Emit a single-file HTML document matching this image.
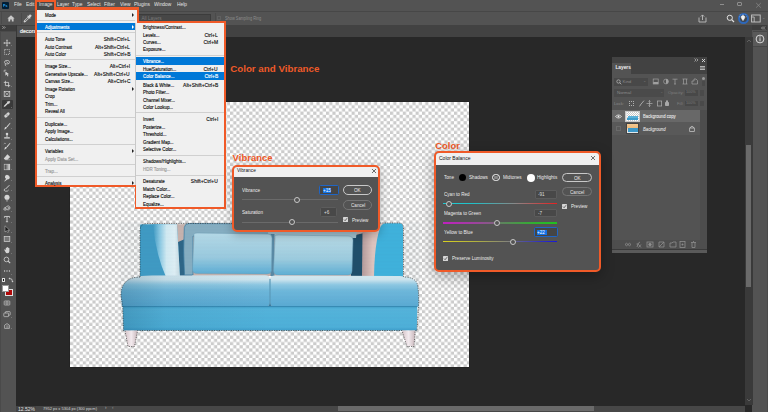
<!DOCTYPE html>
<html><head><meta charset="utf-8">
<style>
*{margin:0;padding:0;box-sizing:border-box}
html,body{width:768px;height:412px;overflow:hidden;background:#282828;font-family:"Liberation Sans",sans-serif;position:relative}
.a{position:absolute}
.t{position:absolute;white-space:nowrap;line-height:1}
#menubar{left:0;top:0;width:768px;height:11px;background:#535353}
#menubar .t{color:#e4e4e4;font-size:5.4px;top:2.4px;transform:scaleX(0.9);transform-origin:0 0}
#opts{left:0;top:11px;width:768px;height:14px;background:#535353;border-top:1px solid #474747}
#tabs{left:0;top:25px;width:768px;height:12px;background:#424242}
#tool{left:0;top:25px;width:16px;height:387px;background:#535353;border-left:1px solid #4a4a4a}
#doc{left:70px;top:102px;width:399px;height:265px;background:#fff;box-shadow:0 0 1px #111}
.menu{background:#f0f0f0;border:2px solid #f05a28}
.mi{-webkit-text-stroke:0.15px currentColor;position:absolute;left:0;font-size:5.1px;transform:scaleX(0.87);transform-origin:0 0;color:#222;white-space:nowrap;line-height:1}
.sc{-webkit-text-stroke:0.15px currentColor;position:absolute;font-size:5.1px;transform:scaleX(0.97);transform-origin:100% 0;color:#222;white-space:nowrap;line-height:1;text-align:right}
.sep{position:absolute;height:1px;background:#d0d0d0}
.hl{position:absolute;background:#0078d7}
.orange{color:#f05a28;font-weight:bold}
.dlgx{background:#535353;border:2px solid #f05a28;border-radius:6px;overflow:hidden}
.dlg .title{position:absolute;left:0;top:0;right:0;background:#f0f0f0}
.dt{position:absolute;font-size:5px;color:#ececec;white-space:nowrap;line-height:1;transform:scaleX(0.92);transform-origin:0 0}
.btn{position:absolute;border:1px solid #bdbdbd;border-radius:5px;color:#eee;font-size:5px;text-align:center}
.inp{position:absolute;background:#454545;border:1px solid #3e3e3e;border-radius:1px;font-size:5px;color:#ddd}
.track{position:absolute;height:1px;background:#6a6a6a}
.knob{position:absolute;width:6px;height:6px;border-radius:50%;border:0.8px solid #c8c8c8;background:#535353}
</style></head><body>

<!-- menubar -->
<div id="menubar" class="a">
  <div class="a" style="left:2px;top:2px;width:7px;height:7px;background:#001e36;border-radius:1px"></div>
  <div class="t" style="left:3px;top:3.5px;font-size:4px;color:#31a8ff;font-weight:bold">Ps</div>
  <div class="t" style="left:14px">File</div>
  <div class="t" style="left:26px">Edit</div>
  <div class="t" style="left:39px">Image</div>
  <div class="t" style="left:57px">Layer</div>
  <div class="t" style="left:72px">Type</div>
  <div class="t" style="left:87px">Select</div>
  <div class="t" style="left:104px">Filter</div>
  <div class="t" style="left:120px">View</div>
  <div class="t" style="left:134px">Plugins</div>
  <div class="t" style="left:154px">Window</div>
  <div class="t" style="left:177px">Help</div>
</div>
<div id="opts" class="a"></div>
<div id="tabs" class="a"></div>
<div id="tool" class="a"></div>

<div id="doc" class="a"><svg width="399" height="265" style="position:absolute;left:0;top:0"><defs><pattern id="chk" width="6.4" height="6.4" patternUnits="userSpaceOnUse"><rect width="6.4" height="6.4" fill="#fff"/><rect x="3.2" y="0" width="3.2" height="3.2" fill="#cccccc"/><rect x="0" y="3.2" width="3.2" height="3.2" fill="#cccccc"/></pattern></defs><rect width="399" height="265" fill="url(#chk)"/></svg></div>


<!-- toolbar icons -->
<div class="a" style="left:0;top:31px;width:16px;height:1px;background:#4a4a4a"></div>
<div class="a" style="left:2.2px;top:100px;width:11px;height:8.8px;background:#3a3a3a;border-radius:1px"></div>
<svg class="a" style="left:3px;top:38.6px" width="8" height="8" viewBox="0 0 10 10"><path d="M5 1 V9 M1 5 H9" stroke="#d4d4d4" stroke-width="1"/><path d="M5 0.5 L3.8 2 H6.2 Z M5 9.5 L3.8 8 H6.2 Z M0.5 5 L2 3.8 V6.2 Z M9.5 5 L8 3.8 V6.2 Z" fill="#d4d4d4"/></svg>
<svg class="a" style="left:3px;top:48.0px" width="8" height="8" viewBox="0 0 10 10"><rect x="2" y="2" width="6" height="6" fill="none" stroke="#d4d4d4" stroke-width="0.9" stroke-dasharray="1.5 1"/></svg>
<svg class="a" style="left:3px;top:58.5px" width="8" height="8" viewBox="0 0 10 10"><ellipse cx="5" cy="4" rx="3.2" ry="2.3" fill="none" stroke="#d4d4d4" stroke-width="0.9"/><path d="M3 6 Q2 8 4 9" fill="none" stroke="#d4d4d4" stroke-width="0.9"/><path d="M4 3 L7 6" stroke="#d4d4d4" stroke-width="0.9"/></svg>
<svg class="a" style="left:3px;top:69.2px" width="8" height="8" viewBox="0 0 10 10"><path d="M1.5 1.5 H4 M1.5 1.5 V4" stroke="#d4d4d4" stroke-width="0.8"/><path d="M3 3 L3 8.5 L4.6 7 L5.8 9.3 L6.8 8.8 L5.7 6.6 L7.8 6.5 Z" fill="#d4d4d4"/></svg>
<svg class="a" style="left:3px;top:79.6px" width="8" height="8" viewBox="0 0 10 10"><path d="M3 1 V7 H9 M1 3 H7 V9" fill="none" stroke="#d4d4d4" stroke-width="1"/></svg>
<svg class="a" style="left:3px;top:89.8px" width="8" height="8" viewBox="0 0 10 10"><rect x="1.5" y="2" width="7" height="6" fill="none" stroke="#d4d4d4" stroke-width="0.9"/><path d="M1.5 2 L8.5 8 M8.5 2 L1.5 8" stroke="#d4d4d4" stroke-width="0.7"/></svg>
<svg class="a" style="left:3px;top:100.4px" width="8" height="8" viewBox="0 0 10 10"><path d="M7.6 0.8 L9.2 2.4 L7.6 4 L8.1 4.5 L7.4 5.2 L6.6 4.4 L2.8 8.2 L1.6 8.4 L1.2 9 L0.8 8.6 L1.3 7.9 L1.5 6.9 L5.3 3.1 L4.6 2.3 L5.3 1.6 L5.9 2.3 Z" fill="#d4d4d4"/></svg>
<svg class="a" style="left:3px;top:110.9px" width="8" height="8" viewBox="0 0 10 10"><g transform="rotate(-45 5 5)"><rect x="1" y="3.3" width="8" height="3.4" rx="1.7" fill="#d4d4d4"/></g><circle cx="5" cy="5" r="0.7" fill="#535353"/></svg>
<svg class="a" style="left:3px;top:121.7px" width="8" height="8" viewBox="0 0 10 10"><path d="M8.8 1 L4.5 5.6 L5.5 6.5 L9.3 1.6 Z" fill="#d4d4d4"/><path d="M4 6 Q2 6.3 2 8 Q1.8 9 1 9.3 Q3.8 9.6 5 7 Z" fill="#d4d4d4"/></svg>
<svg class="a" style="left:3px;top:131.9px" width="8" height="8" viewBox="0 0 10 10"><circle cx="5" cy="2.6" r="1.6" fill="#d4d4d4"/><rect x="4.4" y="3.8" width="1.2" height="2.5" fill="#d4d4d4"/><path d="M1.5 6.5 H8.5 V8.2 H1.5 Z" fill="#d4d4d4"/></svg>
<svg class="a" style="left:3px;top:142.0px" width="8" height="8" viewBox="0 0 10 10"><path d="M8.8 1 L4.5 5.6 L5.5 6.5 L9.3 1.6 Z" fill="#d4d4d4"/><path d="M4 6 Q2 6.3 2 8 Q1.8 9 1 9.3 Q3.8 9.6 5 7 Z" fill="#d4d4d4"/><path d="M1 2.5 Q2 1 3.5 2" fill="none" stroke="#d4d4d4" stroke-width="0.7"/></svg>
<svg class="a" style="left:3px;top:152.6px" width="8" height="8" viewBox="0 0 10 10"><path d="M5.5 1.5 L9 5 L5.5 8.5 H2.5 L1 7 Z" fill="#d4d4d4"/><path d="M3 8.5 H9" stroke="#d4d4d4" stroke-width="0.6"/></svg>
<svg class="a" style="left:3px;top:162.8px" width="8" height="8" viewBox="0 0 10 10"><defs><linearGradient id="tg"><stop offset="0" stop-color="#333"/><stop offset="1" stop-color="#e0e0e0"/></linearGradient></defs><rect x="1.5" y="1.5" width="7" height="7" fill="url(#tg)" stroke="#d4d4d4" stroke-width="0.7"/></svg>
<svg class="a" style="left:3px;top:173.6px" width="8" height="8" viewBox="0 0 10 10"><path d="M5 1 Q8.5 2 8.5 4.5 Q8.5 7 5.5 7 L2 9.5 L1.5 9 L4 6 Q2 5 2.5 3 Q3 1 5 1 Z" fill="#d4d4d4"/></svg>
<svg class="a" style="left:3px;top:183.6px" width="8" height="8" viewBox="0 0 10 10"><path d="M8 1.5 L3 6.5" stroke="#d4d4d4" stroke-width="1.2"/><path d="M2 6 Q0.5 8.5 3 9 Q6 9.5 7 7.5" fill="none" stroke="#d4d4d4" stroke-width="1"/></svg>
<svg class="a" style="left:3px;top:193.5px" width="8" height="8" viewBox="0 0 10 10"><circle cx="5" cy="4" r="3.2" fill="#d4d4d4"/><path d="M5 7 V9.5" stroke="#d4d4d4" stroke-width="1"/></svg>
<svg class="a" style="left:3px;top:204.2px" width="8" height="8" viewBox="0 0 10 10"><path d="M1 7 Q1 4 4 4 Q5 2 7 2.5 Q9.5 3.5 8.5 6 Q7 8 4.5 7 Q2.5 8.5 1 7 Z" fill="none" stroke="#d4d4d4" stroke-width="1"/><circle cx="3.6" cy="6" r="0.9" fill="#d4d4d4"/><circle cx="6.6" cy="5" r="0.9" fill="#d4d4d4"/></svg>
<svg class="a" style="left:3px;top:215.0px" width="8" height="8" viewBox="0 0 10 10"><path d="M1.8 1.8 H8.2 V3.4 M1.8 1.8 V3.4 M5 1.8 V8.4 M3.6 8.4 H6.4" fill="none" stroke="#d4d4d4" stroke-width="1.1"/></svg>
<svg class="a" style="left:3px;top:225.2px" width="8" height="8" viewBox="0 0 10 10"><path d="M2.5 1 L2.5 8.8 L4.4 7.2 L5.8 9.6 L7 9 L5.8 6.6 L8.2 6.4 Z" fill="#1a1a1a" stroke="#d4d4d4" stroke-width="0.6"/></svg>
<svg class="a" style="left:3px;top:235.4px" width="8" height="8" viewBox="0 0 10 10"><rect x="1.5" y="2" width="7" height="6" fill="#777" stroke="#d4d4d4" stroke-width="0.9"/></svg>
<svg class="a" style="left:3px;top:246.3px" width="8" height="8" viewBox="0 0 10 10"><path d="M2 5.5 Q1 4.5 2.2 4 L3.5 5 V2.5 Q4.2 1.5 5 2.5 V1.8 Q5.8 0.8 6.5 1.8 V2.6 Q7.3 1.8 8 2.8 V6.5 Q8 9 5.5 9.2 Q3.5 9.2 2 5.5 Z" fill="#d4d4d4"/></svg>
<svg class="a" style="left:3px;top:256.2px" width="8" height="8" viewBox="0 0 10 10"><circle cx="4.3" cy="4.3" r="2.9" fill="none" stroke="#d4d4d4" stroke-width="1"/><path d="M6.4 6.4 L9 9" stroke="#d4d4d4" stroke-width="1.3"/></svg>
<svg class="a" style="left:3px;top:267.2px" width="8" height="8" viewBox="0 0 10 10"><circle cx="2" cy="5" r="0.8" fill="#d4d4d4"/><circle cx="5" cy="5" r="0.8" fill="#d4d4d4"/><circle cx="8" cy="5" r="0.8" fill="#d4d4d4"/></svg>
<svg class="a" style="left:3px;top:298.9px" width="8" height="8" viewBox="0 0 10 10"><rect x="1.5" y="2.5" width="7" height="5" rx="0.8" fill="none" stroke="#d4d4d4" stroke-width="0.8"/><circle cx="5" cy="5" r="1.5" fill="none" stroke="#d4d4d4" stroke-width="0.8"/></svg>
<svg class="a" style="left:3px;top:310.0px" width="8" height="8" viewBox="0 0 10 10"><rect x="3" y="2" width="6" height="4.5" rx="0.8" fill="none" stroke="#d4d4d4" stroke-width="0.8"/><rect x="1" y="3.8" width="6" height="4.5" rx="0.8" fill="#535353" stroke="#d4d4d4" stroke-width="0.8"/></svg>
<svg class="a" style="left:3px;top:321.8px" width="8" height="8" viewBox="0 0 10 10"><path d="M2 4 L5 2 L8 4 V8 H2 Z" fill="none" stroke="#d4d4d4" stroke-width="0.8"/><path d="M4 5 H7 M4 6.5 H7" stroke="#d4d4d4" stroke-width="0.6"/></svg>
<div class="a" style="left:11.3px;top:45.2px;width:0;height:0;border-left:1.3px solid transparent;border-bottom:1.3px solid #9a9a9a"></div>
<div class="a" style="left:11.3px;top:54.6px;width:0;height:0;border-left:1.3px solid transparent;border-bottom:1.3px solid #9a9a9a"></div>
<div class="a" style="left:11.3px;top:65.1px;width:0;height:0;border-left:1.3px solid transparent;border-bottom:1.3px solid #9a9a9a"></div>
<div class="a" style="left:11.3px;top:75.8px;width:0;height:0;border-left:1.3px solid transparent;border-bottom:1.3px solid #9a9a9a"></div>
<div class="a" style="left:11.3px;top:86.2px;width:0;height:0;border-left:1.3px solid transparent;border-bottom:1.3px solid #9a9a9a"></div>
<div class="a" style="left:11.3px;top:107.0px;width:0;height:0;border-left:1.3px solid transparent;border-bottom:1.3px solid #9a9a9a"></div>
<div class="a" style="left:11.3px;top:117.5px;width:0;height:0;border-left:1.3px solid transparent;border-bottom:1.3px solid #9a9a9a"></div>
<div class="a" style="left:11.3px;top:128.3px;width:0;height:0;border-left:1.3px solid transparent;border-bottom:1.3px solid #9a9a9a"></div>
<div class="a" style="left:11.3px;top:138.5px;width:0;height:0;border-left:1.3px solid transparent;border-bottom:1.3px solid #9a9a9a"></div>
<div class="a" style="left:11.3px;top:148.6px;width:0;height:0;border-left:1.3px solid transparent;border-bottom:1.3px solid #9a9a9a"></div>
<div class="a" style="left:11.3px;top:159.2px;width:0;height:0;border-left:1.3px solid transparent;border-bottom:1.3px solid #9a9a9a"></div>
<div class="a" style="left:11.3px;top:169.4px;width:0;height:0;border-left:1.3px solid transparent;border-bottom:1.3px solid #9a9a9a"></div>
<div class="a" style="left:11.3px;top:180.2px;width:0;height:0;border-left:1.3px solid transparent;border-bottom:1.3px solid #9a9a9a"></div>
<div class="a" style="left:11.3px;top:190.2px;width:0;height:0;border-left:1.3px solid transparent;border-bottom:1.3px solid #9a9a9a"></div>
<div class="a" style="left:11.3px;top:200.1px;width:0;height:0;border-left:1.3px solid transparent;border-bottom:1.3px solid #9a9a9a"></div>
<div class="a" style="left:11.3px;top:210.8px;width:0;height:0;border-left:1.3px solid transparent;border-bottom:1.3px solid #9a9a9a"></div>
<div class="a" style="left:11.3px;top:221.6px;width:0;height:0;border-left:1.3px solid transparent;border-bottom:1.3px solid #9a9a9a"></div>
<div class="a" style="left:11.3px;top:231.8px;width:0;height:0;border-left:1.3px solid transparent;border-bottom:1.3px solid #9a9a9a"></div>
<div class="a" style="left:11.3px;top:242.0px;width:0;height:0;border-left:1.3px solid transparent;border-bottom:1.3px solid #9a9a9a"></div>
<div class="a" style="left:11.3px;top:252.9px;width:0;height:0;border-left:1.3px solid transparent;border-bottom:1.3px solid #9a9a9a"></div>
<div class="a" style="left:11.3px;top:273.8px;width:0;height:0;border-left:1.3px solid transparent;border-bottom:1.3px solid #9a9a9a"></div>
<div class="a" style="left:11.3px;top:316.6px;width:0;height:0;border-left:1.3px solid transparent;border-bottom:1.3px solid #9a9a9a"></div>
<div class="a" style="left:11.3px;top:328.4px;width:0;height:0;border-left:1.3px solid transparent;border-bottom:1.3px solid #9a9a9a"></div>
<div class="a" style="left:2px;top:278px;width:3px;height:3.5px;background:#111;border:0.5px solid #ddd"></div>
<svg class="a" style="left:8px;top:277px" width="6" height="6" viewBox="0 0 6 6"><path d="M1 1.5 Q4.5 1 4.5 4.5" fill="none" stroke="#d0d0d0" stroke-width="0.8"/><path d="M0.5 1.5 L2 0.5 V2.5 Z M4.5 5.5 L3.5 4 H5.5 Z" fill="#d0d0d0"/></svg>
<div class="a" style="left:5.2px;top:288.5px;width:7.9px;height:7.8px;background:#b00808;border:0.6px solid #e0e0e0"></div>
<div class="a" style="left:2px;top:284.5px;width:6.9px;height:7.2px;background:#fff;border:0.5px solid #999"></div>
<!-- sofa -->
<svg class="a" style="left:70px;top:102px" width="399" height="265" viewBox="70 102 399 265">
 <defs>
  <linearGradient id="armL" x1="140" x2="179" y1="0" y2="0" gradientUnits="userSpaceOnUse">
   <stop offset="0" stop-color="#44a6d0"/><stop offset="0.42" stop-color="#4eaed6"/><stop offset="0.62" stop-color="#86cbe6"/><stop offset="0.85" stop-color="#b8e2f0"/><stop offset="1" stop-color="#98d2e8"/>
  </linearGradient>
  <linearGradient id="armH" x1="153" x2="180" y1="0" y2="0" gradientUnits="userSpaceOnUse">
   <stop offset="0" stop-color="#409cc6"/><stop offset="0.25" stop-color="#8ccbe6"/><stop offset="0.5" stop-color="#d6eef6"/><stop offset="0.8" stop-color="#e2f2f8"/><stop offset="1" stop-color="#c8dce4"/>
  </linearGradient>
  <linearGradient id="armRin" x1="362" x2="383" y1="0" y2="0" gradientUnits="userSpaceOnUse">
   <stop offset="0" stop-color="#b89c9c"/><stop offset="0.5" stop-color="#e2c6c0"/><stop offset="1" stop-color="#e8d0ca"/>
  </linearGradient>
  <linearGradient id="pil" x1="0" x2="0" y1="0" y2="1">
   <stop offset="0" stop-color="#b8dcea"/><stop offset="0.6" stop-color="#9ccde2"/><stop offset="1" stop-color="#5eb0d8"/>
  </linearGradient>
  <linearGradient id="pilR" x1="0" x2="0" y1="0" y2="1">
   <stop offset="0" stop-color="#bcdeea"/><stop offset="0.6" stop-color="#a0cfe2"/><stop offset="1" stop-color="#60b2d8"/>
  </linearGradient>
  <linearGradient id="seat" x1="0" x2="0" y1="275" y2="307" gradientUnits="userSpaceOnUse">
   <stop offset="0" stop-color="#d8ecf4"/><stop offset="0.14" stop-color="#d4eaf3"/><stop offset="0.3" stop-color="#92cce6"/><stop offset="0.5" stop-color="#70bade"/><stop offset="1" stop-color="#5aacd6"/>
  </linearGradient>
  <linearGradient id="base" x1="0" x2="0" y1="306" y2="331" gradientUnits="userSpaceOnUse">
   <stop offset="0" stop-color="#3e9ec8"/><stop offset="0.12" stop-color="#56b6de"/><stop offset="0.85" stop-color="#4eb2dc"/><stop offset="1" stop-color="#3c9ccb"/>
  </linearGradient>
  <linearGradient id="leg" x1="0" x2="1" y1="0" y2="0">
   <stop offset="0" stop-color="#d6c4c8"/><stop offset="0.5" stop-color="#f2eaee"/><stop offset="1" stop-color="#c8b6ba"/>
  </linearGradient>
  <linearGradient id="shadeL" x1="121" x2="419" y1="0" y2="0" gradientUnits="userSpaceOnUse">
   <stop offset="0" stop-color="#0a3a5a" stop-opacity="0.22"/><stop offset="0.15" stop-color="#0a3a5a" stop-opacity="0.06"/><stop offset="0.5" stop-color="#0a3a5a" stop-opacity="0"/><stop offset="1" stop-color="#0a3a5a" stop-opacity="0"/>
  </linearGradient>
  <pattern id="knit" width="1.4" height="1.4" patternUnits="userSpaceOnUse"><circle cx="0.7" cy="0.7" r="0.35" fill="#1a4a66" opacity="0.18"/></pattern>
 </defs>
 <!-- back visible strip -->
 <path d="M174 224.2 L364 223.5 L364 276 L174 276 Z" fill="#cbb5b0"/>
 <path d="M178 242 L192 236 L192 276 L178 276 Z" fill="#2e6688"/>
 <path d="M351 236 L364 233 L364 276 L351 276 Z" fill="#1f4e6a"/>
 <!-- back pillows -->
 <path d="M184.5 275 Q183 250 184.3 227.5 Q184.8 223.5 189 223.5 L270 224 L270 236 L193 236 L193 275 Z" fill="#88b0c4" stroke="#3a7aa0" stroke-width="0.7"/>
 <path d="M268 224 L350 224 Q356 224.5 357 230 L356 238 L268 238 Z" fill="#a8c8d6"/>
 <path d="M270.5 234 L274.5 234 L274.5 276 L270.5 276 Z" fill="#5a8aa6"/>
 <!-- left arm -->
 <path d="M140 277 L140 225.6 Q140 224.2 141.6 224.2 L177 224.2 L180 277 Z" fill="#409cc6"/>
 <path d="M153 224.2 L177 224.2 L180 277 L166 277 Q155 252 153 224.2 Z" fill="url(#armH)"/>
<!-- right arm inner -->
 <path d="M362 276 L362.5 231 Q363.5 223.5 371 223.5 L386 223.5 L383 276 Z" fill="url(#armRin)"/>
 <!-- right arm outer -->
 <path d="M374 277 Q374.5 244 380 228 Q381.5 223.2 386 223.2 L399.5 223.2 Q403 223.2 403 227 L403 277 Z" fill="#40b4df"/>
 <!-- pillows -->
 <path d="M194 236 Q193 233 197 233 L268 234 Q272 234 272 238 L271.5 270.5 Q271 274 267 274 L197 273.5 Q192 273.5 192.5 268 Z" fill="url(#pil)" stroke="#6f9fb6" stroke-width="0.5"/>
 <path d="M275 238 Q274 235 278 235 L348 236 Q353 236 353 240 L352 271 Q352 275 348 275 L278 275 Q273.5 275 273.5 270 Z" fill="url(#pilR)" stroke="#6f9fb6" stroke-width="0.5"/>
 <!-- seats -->
 <path d="M121 296 Q120.5 281 134 277.5 Q140 275.5 152 275.5 L265 275.2 Q270 275.2 270 280 L270 302 Q270 306.6 265 306.6 L122 306.6 Z" fill="url(#seat)"/>
 <path d="M270 280 Q270 275.5 275 275.5 L400 276 Q414 276.5 417 283 Q419 288 418.6 306.6 L275 306.6 Q270 306.6 270 302 Z" fill="url(#seat)"/>
 <path d="M269.4 279 L270.6 279 L270.6 306.6 L269.4 306.6 Z" fill="#5c9cbc"/>
 <path d="M265 306.6 Q270 306.6 270 302 Q270 306.6 275 306.6 Z" fill="#3a7ea4"/>
 <!-- base -->
 <path d="M122.7 306.2 L417.3 306.2 L416.8 330.5 L123.5 330.5 Z" fill="url(#base)"/>
 <path d="M122.7 306 L417.3 306 L417.3 307 L122.7 307 Z" fill="#2f86b2" opacity="0.8"/>
 <!-- legs -->
 <path d="M125 330.5 L137.6 330.5 L134.5 346.5 L128 346.5 Z" fill="url(#leg)"/>
 <path d="M402 330.5 L415.2 330.5 L414 346 L407 346 Z" fill="url(#leg)"/>
 <path d="M121 296 Q120.5 281 134 277.5 Q140 275.5 152 275.5 L400 276 Q414 276.5 417 283 Q419 288 418.6 306.6 L417 330.5 L123.5 330.5 L122.7 306.6 Z" fill="url(#shadeL)"/>
 <rect x="120" y="222" width="300" height="109" fill="url(#knit)"/>
 <!-- marching ants -->
 <path d="M140 277 L140 231 Q140 223.5 147 223.5 L399 223 Q403 223 403.5 227 L403.5 277 Q414 277 417 283 Q419 288 418.6 306.5 L417 330.5 L415.2 330.5 L414 346.5 L407 346.5 L402 330.5 L137.6 330.5 L134.5 346.5 L128 346.5 L125 330.5 L123.5 330.5 L122.7 306.5 L121 296 Q120.5 281 134 277.5 Z" fill="none" stroke="#222" stroke-width="0.6" stroke-dasharray="1.2 1.2"/>
</svg>

<!-- options bar content -->
<div class="a" style="left:1px;top:12px;width:1px;height:12px;background:#4a4a4a"></div>
<div class="a" style="left:21px;top:13px;width:1px;height:11px;background:#4a4a4a"></div>
<svg class="a" style="left:7px;top:15px" width="8" height="7" viewBox="0 0 8 7"><path d="M4 0.3 L7.6 3.5 L6.6 3.5 L6.6 6.6 L4.8 6.6 L4.8 4.6 L3.2 4.6 L3.2 6.6 L1.4 6.6 L1.4 3.5 L0.4 3.5 Z" fill="#c8c8c8"/></svg>
<svg class="a" style="left:23px;top:14px" width="9" height="9" viewBox="0 0 9 9"><path d="M6.4 0.8 Q7.6 0.2 8.3 1 Q8.9 1.8 8.1 2.8 L7.1 3.6 L7.6 4.1 L6.9 4.8 L6.3 4.2 L2.6 7.9 L1.2 8.4 L0.6 7.8 L1.1 6.4 L4.8 2.7 L4.2 2.1 L4.9 1.4 L5.4 1.9 Z M2 6.4 L2.6 7 L5.6 4 L5 3.4 Z" fill="#d0d0d0" fill-rule="evenodd"/></svg>
<div class="a" style="left:137px;top:14px;width:74px;height:9px;background:#474747;border:0.5px solid #3c3c3c"></div>
<div class="t" style="left:141.5px;top:16.5px;font-size:4.6px;color:#7a7a7a">All Layers</div>
<div class="a" style="left:215px;top:13px;width:1px;height:11px;background:#4a4a4a"></div>
<div class="a" style="left:216.5px;top:15.8px;width:4.5px;height:4.5px;border:0.5px solid #606060"></div>
<div class="t" style="left:225px;top:16px;font-size:5px;color:#8e8e8e;transform:scaleX(0.78);transform-origin:0 0">Show Sampling Ring</div>
<svg class="a" style="left:698px;top:14px" width="9" height="9" viewBox="0 0 9 9"><path d="M1 3.5 V8 H8 V3.5" fill="none" stroke="#bdbdbd" stroke-width="0.9"/><path d="M4.5 6 V1 M2.8 2.6 L4.5 0.9 L6.2 2.6" fill="none" stroke="#bdbdbd" stroke-width="0.9"/></svg>
<svg class="a" style="left:726px;top:14px" width="9" height="9" viewBox="0 0 9 9"><circle cx="3.8" cy="3.8" r="2.6" fill="none" stroke="#e0e0e0" stroke-width="1"/><path d="M5.7 5.7 L8 8" stroke="#e0e0e0" stroke-width="1.2"/></svg>
<div class="a" style="left:737.6px;top:12.5px;width:11.8px;height:11.8px;border-radius:50%;background:#3e4650;border:2px solid #2d68bc"></div>
<svg class="a" style="left:739px;top:14px" width="8" height="8" viewBox="0 0 8 8"><path d="M4 1.6 C2.8 1.6 2.2 2.5 2.2 3.3 C2.2 4.2 3 4.6 3.1 5.5 H4.9 C5 4.6 5.8 4.2 5.8 3.3 C5.8 2.5 5.2 1.6 4 1.6 Z M3.2 6.3 H4.8" fill="#f0f0f0" stroke="#fff" stroke-width="0.6"/><path d="M0.4 2.8 H1.1 M6.9 2.8 H7.6 M1.3 0.6 L1.8 1.1 M6.7 0.6 L6.2 1.1 M4 0 V0.6" stroke="#fff" stroke-width="0.5"/></svg>
<svg class="a" style="left:751px;top:14px" width="10" height="9" viewBox="0 0 10 9"><rect x="0.6" y="1" width="8.6" height="7" fill="none" stroke="#c8c8c8" stroke-width="0.9"/><path d="M0.6 3 H3.2 V8" fill="none" stroke="#c8c8c8" stroke-width="0.8"/></svg>
<div class="t" style="left:762px;top:16px;font-size:4px;color:#8a8a8a">&#8964;</div>
<!-- window controls -->
<div class="a" style="left:719.5px;top:4.2px;width:4.5px;height:0.6px;background:#8e8e8e"></div>
<div class="a" style="left:737.3px;top:2.3px;width:4.6px;height:4.2px;border:0.7px solid #8e8e8e;border-radius:1px"></div>
<svg class="a" style="left:755px;top:1.5px" width="7" height="7" viewBox="0 0 7 7"><path d="M1.2 1 L5.8 5.6 M5.8 1 L1.2 5.6" stroke="#8e8e8e" stroke-width="0.7"/></svg>
<!-- tab row -->
<div class="a" style="left:0;top:25px;width:15.5px;height:6px;background:#3d3d3d"></div>
<svg class="a" style="left:1.8px;top:26.3px" width="4" height="3" viewBox="0 0 4 3"><path d="M0.4 0.3 L1.5 1.5 L0.4 2.7 M2 0.3 L3.1 1.5 L2 2.7" fill="none" stroke="#e8e8e8" stroke-width="0.55"/></svg>
<div class="a" style="left:15.5px;top:25px;width:1px;height:12px;background:#383838"></div>
<div class="a" style="left:16.5px;top:25.5px;width:70px;height:11.5px;background:#505050"></div>
<div class="t" style="left:20px;top:28.6px;font-size:5.4px;color:#f4f4f4;-webkit-text-stroke:0.15px #f4f4f4">decorative-sofa-sampling.png</div>
<div class="a" style="left:752px;top:25px;width:16px;height:387px;background:#535353"></div>
<div class="a" style="left:752px;top:25px;width:16px;height:5px;background:#3d3d3d"></div>
<svg class="a" style="left:761px;top:25.5px" width="5" height="4" viewBox="0 0 5 4"><path d="M2 0.5 L0.5 2 L2 3.5 M4 0.5 L2.5 2 L4 3.5" fill="none" stroke="#e0e0e0" stroke-width="0.6"/></svg>
<div class="a" style="left:752.5px;top:30.5px;width:15px;height:16px;background:#5a5a5a;border-top:1px solid #474747;border-bottom:1px solid #474747"></div>
<svg class="a" style="left:755px;top:34px" width="10" height="10" viewBox="0 0 10 10"><circle cx="5" cy="5" r="3.9" fill="none" stroke="#e6e6e6" stroke-width="0.9"/><path d="M5 4.2 V7.3" stroke="#e6e6e6" stroke-width="0.9"/><circle cx="5" cy="2.9" r="0.55" fill="#e6e6e6"/></svg>
<div class="a" style="left:767px;top:25px;width:1px;height:387px;background:#4a4a4a"></div>
<!-- vertical scrollbar -->
<div class="a" style="left:744.5px;top:37px;width:8px;height:368px;background:#3a3a3a"></div>
<div class="a" style="left:745.5px;top:145px;width:5.3px;height:142px;background:#6a6a6a"></div>
<svg class="a" style="left:746px;top:39px" width="6" height="4" viewBox="0 0 6 4"><path d="M1 3 L3 1 L5 3" fill="none" stroke="#7a7a7a" stroke-width="0.6"/></svg>
<svg class="a" style="left:746px;top:398px" width="6" height="4" viewBox="0 0 6 4"><path d="M1 1 L3 3 L5 1" fill="none" stroke="#7a7a7a" stroke-width="0.6"/></svg>
<!-- status bar -->
<div class="a" style="left:16px;top:405.5px;width:728.5px;height:6.5px;background:#474747"></div>
<div class="a" style="left:338px;top:406.2px;width:256px;height:4.8px;background:#6a6a6a"></div>
<div class="a" style="left:16px;top:405.5px;width:19.5px;height:6.5px;background:#424242"></div>
<div class="t" style="left:18px;top:407.3px;font-size:5px;color:#e0e0e0">12.52%</div>
<div class="t" style="left:43px;top:407.2px;font-size:4px;color:#d4d4d4">7952 px x 5304 px (300 ppcm)</div>
<div class="t" style="left:105px;top:406px;font-size:4.5px;color:#bdbdbd">&#8250;</div>
<div class="t" style="left:112px;top:406px;font-size:4.5px;color:#9a9a9a">&#8249;</div>



<!-- image menu outlines -->
<div class="a" style="left:35px;top:0;width:21px;height:10px;background:#f05a28"></div>
<div class="a" style="left:35px;top:7.3px;width:104px;height:179.7px;background:#f05a28"></div>
<div class="a" style="left:135px;top:21px;width:91px;height:188px;background:#f05a28"></div>
<div class="a" style="left:37px;top:9.5px;width:100px;height:175.5px;background:#f0f0f0"></div>
<div class="a" style="left:136px;top:23px;width:88px;height:184px;background:#f0f0f0"></div>
<div class="a" style="left:37px;top:2px;width:17px;height:7.5px;background:#464646"></div>
<div class="t" style="left:38.8px;top:2.4px;font-size:5.4px;color:#e4e4e4;transform:scaleX(0.9);transform-origin:0 0">Image</div>
<div class="a" style="left:135px;top:23px;width:1px;height:162px;background:#c8c8c8"></div>
<div class="mi" style="left:45px;top:13.4px;color:#111">Mode</div>
<div class="a" style="left:131.5px;top:13.2px;width:0;height:0;border-left:2.8px solid #222;border-top:2px solid transparent;border-bottom:2px solid transparent"></div>
<div class="sep" style="left:37px;top:19.8px;width:98px"></div>
<div class="hl" style="left:37px;top:22.9px;width:98px;height:7.2px"></div>
<div class="mi" style="left:45px;top:24.9px;color:#fff">Adjustments</div>
<div class="a" style="left:131.5px;top:24.7px;width:0;height:0;border-left:2.8px solid #fff;border-top:2px solid transparent;border-bottom:2px solid transparent"></div>
<div class="sep" style="left:37px;top:31.5px;width:98px"></div>
<div class="mi" style="left:45px;top:37.4px;color:#111">Auto Tone</div>
<div class="sc" style="right:638px;top:37.4px;color:#111">Shift+Ctrl+L</div>
<div class="mi" style="left:45px;top:44.7px;color:#111">Auto Contrast</div>
<div class="sc" style="right:638px;top:44.7px;color:#111">Alt+Shift+Ctrl+L</div>
<div class="mi" style="left:45px;top:52.2px;color:#111">Auto Color</div>
<div class="sc" style="right:638px;top:52.2px;color:#111">Shift+Ctrl+B</div>
<div class="sep" style="left:37px;top:59.0px;width:98px"></div>
<div class="mi" style="left:45px;top:64.4px;color:#111">Image Size...</div>
<div class="sc" style="right:638px;top:64.4px;color:#111">Alt+Ctrl+I</div>
<div class="mi" style="left:45px;top:71.6px;color:#111">Generative Upscale...</div>
<div class="sc" style="right:638px;top:71.6px;color:#111">Alt+Shift+Ctrl+U</div>
<div class="mi" style="left:45px;top:79.4px;color:#111">Canvas Size...</div>
<div class="sc" style="right:638px;top:79.4px;color:#111">Alt+Ctrl+C</div>
<div class="mi" style="left:45px;top:87.4px;color:#111">Image Rotation</div>
<div class="a" style="left:131.5px;top:87.2px;width:0;height:0;border-left:2.8px solid #222;border-top:2px solid transparent;border-bottom:2px solid transparent"></div>
<div class="mi" style="left:45px;top:94.4px;color:#111">Crop</div>
<div class="mi" style="left:45px;top:102.0px;color:#111">Trim...</div>
<div class="mi" style="left:45px;top:109.4px;color:#111">Reveal All</div>
<div class="sep" style="left:37px;top:117.0px;width:98px"></div>
<div class="mi" style="left:45px;top:122.1px;color:#111">Duplicate...</div>
<div class="mi" style="left:45px;top:129.4px;color:#111">Apply Image...</div>
<div class="mi" style="left:45px;top:136.7px;color:#111">Calculations...</div>
<div class="sep" style="left:37px;top:144.0px;width:98px"></div>
<div class="mi" style="left:45px;top:149.4px;color:#111">Variables</div>
<div class="a" style="left:131.5px;top:149.2px;width:0;height:0;border-left:2.8px solid #222;border-top:2px solid transparent;border-bottom:2px solid transparent"></div>
<div class="mi" style="left:45px;top:156.9px;color:#9a9a9a">Apply Data Set...</div>
<div class="sep" style="left:37px;top:164.0px;width:98px"></div>
<div class="mi" style="left:45px;top:168.9px;color:#9a9a9a">Trap...</div>
<div class="sep" style="left:37px;top:176.2px;width:98px"></div>
<div class="mi" style="left:45px;top:180.9px;color:#111">Analysis</div>
<div class="a" style="left:131.5px;top:180.7px;width:0;height:0;border-left:2.8px solid #222;border-top:2px solid transparent;border-bottom:2px solid transparent"></div>
<!--sub-->
<div class="mi" style="left:143px;top:25.4px;color:#111">Brightness/Contrast...</div>
<div class="mi" style="left:143px;top:32.6px;color:#111">Levels...</div>
<div class="sc" style="right:550px;top:32.6px;color:#111">Ctrl+L</div>
<div class="mi" style="left:143px;top:40.4px;color:#111">Curves...</div>
<div class="sc" style="right:550px;top:40.4px;color:#111">Ctrl+M</div>
<div class="mi" style="left:143px;top:47.4px;color:#111">Exposure...</div>
<div class="sep" style="left:136px;top:55.0px;width:88px"></div>
<div class="hl" style="left:136px;top:57.4px;width:88px;height:7.2px"></div>
<div class="mi" style="left:143px;top:59.4px;color:#fff">Vibrance...</div>
<div class="mi" style="left:143px;top:67.4px;color:#111">Hue/Saturation...</div>
<div class="sc" style="right:550px;top:67.4px;color:#111">Ctrl+U</div>
<div class="hl" style="left:136px;top:72.4px;width:88px;height:7.2px"></div>
<div class="mi" style="left:143px;top:74.4px;color:#fff">Color Balance...</div>
<div class="sc" style="right:550px;top:74.4px;color:#fff">Ctrl+B</div>
<div class="mi" style="left:143px;top:82.7px;color:#111">Black &amp; White...</div>
<div class="sc" style="right:550px;top:82.7px;color:#111">Alt+Shift+Ctrl+B</div>
<div class="mi" style="left:143px;top:90.2px;color:#111">Photo Filter...</div>
<div class="mi" style="left:143px;top:97.6px;color:#111">Channel Mixer...</div>
<div class="mi" style="left:143px;top:105.2px;color:#111">Color Lookup...</div>
<div class="sep" style="left:136px;top:111.5px;width:88px"></div>
<div class="mi" style="left:143px;top:117.4px;color:#111">Invert</div>
<div class="sc" style="right:550px;top:117.4px;color:#111">Ctrl+I</div>
<div class="mi" style="left:143px;top:125.1px;color:#111">Posterize...</div>
<div class="mi" style="left:143px;top:132.4px;color:#111">Threshold...</div>
<div class="mi" style="left:143px;top:140.1px;color:#111">Gradient Map...</div>
<div class="mi" style="left:143px;top:147.4px;color:#111">Selective Color...</div>
<div class="sep" style="left:136px;top:154.5px;width:88px"></div>
<div class="mi" style="left:143px;top:159.4px;color:#111">Shadows/Highlights...</div>
<div class="mi" style="left:143px;top:167.4px;color:#9a9a9a">HDR Toning...</div>
<div class="sep" style="left:136px;top:174.9px;width:88px"></div>
<div class="mi" style="left:143px;top:179.4px;color:#111">Desaturate</div>
<div class="sc" style="right:550px;top:179.4px;color:#111">Shift+Ctrl+U</div>
<div class="mi" style="left:143px;top:186.9px;color:#111">Match Color...</div>
<div class="mi" style="left:143px;top:194.4px;color:#111">Replace Color...</div>
<div class="mi" style="left:143px;top:202.4px;color:#111">Equalize...</div>



<!-- Layers panel -->
<div class="a" style="left:612px;top:57.4px;width:95px;height:195px;background:#535353"></div>
<div class="a" style="left:612px;top:57.4px;width:95px;height:5.6px;background:#424242"></div>
<svg class="a" style="left:694px;top:58px" width="5" height="4" viewBox="0 0 5 4"><path d="M0.5 0.5 L2 2 L0.5 3.5 M2.5 0.5 L4 2 L2.5 3.5" fill="none" stroke="#d0d0d0" stroke-width="0.6"/></svg>
<svg class="a" style="left:701px;top:58px" width="5" height="5" viewBox="0 0 5 5"><path d="M1 1 L4 4 M4 1 L1 4" stroke="#dcdcdc" stroke-width="0.9"/></svg>
<div class="a" style="left:612px;top:63px;width:95px;height:10.6px;background:#424242"></div>
<div class="a" style="left:612px;top:63px;width:18.7px;height:10.6px;background:#535353"></div>
<div class="t" style="left:615.4px;top:66.2px;font-size:4.8px;color:#f0f0f0;font-weight:bold">Layers</div>
<div class="a" style="left:700px;top:66.3px;width:5px;height:0.6px;background:#b0b0b0;box-shadow:0 1.5px 0 #b0b0b0,0 3px 0 #b0b0b0"></div>
<div class="a" style="left:614px;top:77.9px;width:34px;height:8.5px;background:#484848"></div>
<svg class="a" style="left:616px;top:79px" width="6" height="6" viewBox="0 0 6 6"><circle cx="2.5" cy="2.5" r="1.7" fill="none" stroke="#bdbdbd" stroke-width="0.7"/><path d="M3.7 3.7 L5.3 5.3" stroke="#bdbdbd" stroke-width="0.8"/></svg>
<div class="t" style="left:622.5px;top:80.3px;font-size:4.4px;color:#8a8a8a">Kind</div>
<div class="t" style="left:643px;top:80px;font-size:3.5px;color:#7a7a7a">&#8964;</div>
<svg class="a" style="left:652px;top:78px" width="48" height="7" viewBox="0 0 48 7">
 <g fill="none" stroke="#a0a0a0" stroke-width="0.7">
  <rect x="1.2" y="1" width="5" height="5"/>
  <circle cx="14" cy="3.5" r="2.4"/>
  <path d="M20.5 1.2 H25.5 M23 1.2 V6 M22 6 H24"/>
  <path d="M30.5 1 H35.5 M30.5 6 H35.5 M31.5 1 V6 M34.5 1 V6"/>
  <path d="M40 6 V3 H42 V1 H44 L45.5 2.5 V6 Z"/>
 </g>
 <rect x="1.2" y="4" width="5" height="2" fill="#a0a0a0"/>
 <path d="M14 1.1 A2.4 2.4 0 0 1 14 5.9 Z" fill="#a0a0a0"/>
</svg>
<div class="a" style="left:701.5px;top:77px;width:3px;height:3px;border-radius:50%;background:#9a9a9a"></div>
<div class="a" style="left:701.5px;top:80.5px;width:3px;height:5px;background:#4a4a4a"></div>
<div class="a" style="left:614px;top:88.8px;width:50.4px;height:8.2px;background:#4a4a4a"></div>
<div class="t" style="left:617px;top:91px;font-size:4.4px;color:#8a8a8a">Normal</div>
<div class="t" style="left:660px;top:90.6px;font-size:3.5px;color:#6a6a6a">&#8964;</div>
<div class="t" style="left:668px;top:91px;font-size:4.3px;color:#7e7e7e">Opacity:</div>
<div class="a" style="left:685px;top:90px;width:13px;height:5.5px;background:#484848"></div>
<div class="t" style="left:686px;top:91px;font-size:3.8px;color:#7a7a7a">100%</div>
<div class="a" style="left:699.5px;top:90px;width:4.5px;height:5.5px;background:#4a4a4a"></div>
<div class="t" style="left:614px;top:101.5px;font-size:4.2px;color:#8a8a8a">Lock:</div>
<div class="a" style="left:628.5px;top:101px;width:5px;height:5px;border:0.7px dotted #b0b0b0"></div>
<svg class="a" style="left:639px;top:100px" width="6" height="7" viewBox="0 0 6 7"><path d="M5 0.6 L1.6 4.6 M1.8 4.4 L0.6 6.4" stroke="#bdbdbd" stroke-width="0.8"/></svg>
<svg class="a" style="left:646px;top:100px" width="7" height="7" viewBox="0 0 7 7"><path d="M3.5 0.5 V6.5 M0.5 3.5 H6.5 M2.5 1.5 L3.5 0.5 L4.5 1.5 M2.5 5.5 L3.5 6.5 L4.5 5.5" fill="none" stroke="#b0b0b0" stroke-width="0.7"/></svg>
<svg class="a" style="left:656px;top:100px" width="7" height="7" viewBox="0 0 7 7"><path d="M1 1 H6 M1.5 1 V6 M5.5 1 V6 M1 6 H6" fill="none" stroke="#b0b0b0" stroke-width="0.7"/></svg>
<div class="a" style="left:664.5px;top:102px;width:4.5px;height:4.2px;background:#a8a8a8;border-radius:0.8px"></div>
<div class="a" style="left:665.5px;top:100px;width:2.5px;height:3px;border:0.7px solid #a8a8a8;border-radius:1.5px 1.5px 0 0"></div>
<div class="t" style="left:677px;top:101.5px;font-size:4.2px;color:#7e7e7e">Fill:</div>
<div class="a" style="left:685px;top:100.6px;width:13px;height:5.5px;background:#484848"></div>
<div class="t" style="left:686px;top:101.6px;font-size:3.8px;color:#7a7a7a">100%</div>
<div class="a" style="left:699.5px;top:100.6px;width:4.5px;height:5.5px;background:#4a4a4a"></div>
<!-- layer rows -->
<div class="a" style="left:612px;top:110.4px;width:88px;height:11.6px;background:#686868"></div>
<div class="a" style="left:612px;top:122px;width:88px;height:13px;background:#595959"></div>
<div class="a" style="left:700px;top:110px;width:7px;height:130px;background:#4d4d4d"></div>
<svg class="a" style="left:615px;top:113.5px" width="7" height="5" viewBox="0 0 7 5"><path d="M0.5 2.5 Q3.5 -0.6 6.5 2.5 Q3.5 5.6 0.5 2.5 Z" fill="none" stroke="#f0f0f0" stroke-width="0.7"/><circle cx="3.5" cy="2.5" r="0.9" fill="#f0f0f0"/></svg>
<div class="a" style="left:615.5px;top:125.5px;width:5px;height:5px;border:0.5px solid #6a6a6a"></div>
<div class="a" style="left:625.4px;top:110.6px;width:14.6px;height:11px;background:#e8e8e8;border:0.7px solid #c8c8c8"></div>
<div class="a" style="left:626.5px;top:111.5px;width:12.4px;height:9px;background-image:linear-gradient(45deg,#c8c8c8 25%,transparent 25%,transparent 75%,#c8c8c8 75%),linear-gradient(45deg,#c8c8c8 25%,transparent 25%,transparent 75%,#c8c8c8 75%);background-size:2px 2px;background-position:0 0,1px 1px;background-color:#fff"></div>
<div class="a" style="left:627.5px;top:115.5px;width:10px;height:2px;background:#5ab0d8"></div><div class="a" style="left:627px;top:117.5px;width:11px;height:2.6px;background:#3e9ccb"></div>
<div class="t" style="left:643.3px;top:115px;font-size:4.6px;color:#e8e8e8;-webkit-text-stroke:0.08px #e8e8e8;transform:scaleX(0.92);transform-origin:0 0">Background copy</div>
<div class="a" style="left:626.3px;top:123px;width:12.6px;height:11px;background:linear-gradient(180deg,#f4c890 0%,#eebc80 40%,#e8d8c8 55%,#dfeaf0 100%);border:0.5px solid #444"></div><div class="a" style="left:627.5px;top:128px;width:10px;height:3.5px;background:#3c98c8"></div>
<div class="t" style="left:643.3px;top:128.2px;font-size:4.6px;color:#e0e0e0;font-style:italic;-webkit-text-stroke:0.08px #e0e0e0;transform:scaleX(0.92);transform-origin:0 0">Background</div>
<svg class="a" style="left:689px;top:125px" width="6" height="7" viewBox="0 0 6 7"><rect x="0.7" y="3" width="4.6" height="3.5" fill="none" stroke="#d0d0d0" stroke-width="0.7"/><path d="M1.6 3 V2 Q3 0.3 4.4 2 V3" fill="none" stroke="#d0d0d0" stroke-width="0.7"/></svg>
<!-- footer -->
<div class="a" style="left:612px;top:240px;width:95px;height:9px;background:#4e4e4e"></div>
<div class="a" style="left:612px;top:249px;width:95px;height:1px;background:#3a3a3a"></div>
<div class="a" style="left:612px;top:250px;width:95px;height:2.5px;background:#5a5a5a"></div>
<svg class="a" style="left:624px;top:241px" width="80" height="7" viewBox="0 0 80 7">
 <g fill="none" stroke="#8e8e8e" stroke-width="0.8">
 <path d="M1 3.5 Q2.5 1 4 3.5 Q5.5 6 7 3.5 M1 3.5 Q2.5 6 4 3.5 Q5.5 1 7 3.5"/>
 <path d="M13 6 Q14 1 16 1 M12.5 3 H15 M14.5 3.5 L17 6.5 M17 3.5 L14.5 6.5"/>
 <rect x="23" y="1" width="6" height="5"/><circle cx="26" cy="3.5" r="1.3" fill="#8e8e8e"/>
 <path d="M35 1 H40 V6 H35 Z M35 6 L40 1"/>
 <path d="M46 2 H48 L49 1 H52 V6 H46 Z"/>
 <rect x="56" y="0.5" width="5" height="6"/><path d="M58.5 2.5 V4.5 M57.5 3.5 H59.5"/>
 <path d="M67 1.5 H72 M68 1.5 V6.5 H71 V1.5 M69 0.5 H70"/>
 </g></svg>

<!-- orange labels -->
<div class="t orange" style="left:230.2px;top:63.6px;font-size:9.75px">Color and Vibrance</div>
<div class="t orange" style="left:232.6px;top:153px;font-size:9.5px">Vibrance</div>
<div class="t orange" style="left:435.3px;top:141.2px;font-size:9.4px">Color</div>

<!-- Vibrance dialog -->
<div class="a" style="left:232px;top:165.3px;width:148px;height:66.7px;border:2.1px solid #f05a28;border-radius:5px;background:#535353;overflow:hidden;box-shadow:0 3px 10px rgba(0,0,0,0.25)">
  <div class="a" style="left:0;top:0;width:100%;height:9.4px;background:#f0f0f0"></div>
</div>
<div class="t" style="left:237px;top:168.6px;font-size:4.8px;color:#111">Vibrance</div>
<svg class="a" style="left:371px;top:167.5px" width="6" height="6" viewBox="0 0 6 6"><path d="M1 1 L5 5 M5 1 L1 5" stroke="#333" stroke-width="0.7"/></svg>
<div class="dt" style="left:241.6px;top:187.6px">Vibrance</div>
<div class="dt" style="left:241.6px;top:210.4px">Saturation</div>
<div class="a" style="left:319px;top:184.9px;width:19.5px;height:10.5px;background:#454545;border:1px solid #2065c4;border-radius:1.5px"></div>
<div class="a" style="left:323px;top:187.6px;width:7.7px;height:5.2px;background:#1473e6"></div>
<div class="dt" style="left:323.3px;top:187.8px;color:#fff">+15</div>
<div class="a" style="left:320px;top:207.4px;width:17.3px;height:9.9px;background:#484848;border:0.6px solid #5c5c5c;border-radius:1.5px"></div>
<div class="dt" style="left:323.5px;top:209.8px;color:#dcdcdc">+6</div>
<div class="track" style="left:242px;top:199.4px;width:51.5px"></div>
<div class="track" style="left:300px;top:199.4px;width:38px"></div>
<div class="knob" style="left:293.6px;top:196.9px"></div>
<div class="track" style="left:242px;top:221.6px;width:47.5px"></div>
<div class="track" style="left:295.5px;top:221.6px;width:42.5px"></div>
<div class="knob" style="left:289.2px;top:219.1px"></div>
<div class="btn" style="left:343px;top:185.2px;width:28.7px;height:9.8px;border-color:#c8c8c8"></div>
<div class="dt" style="left:354px;top:187.8px;color:#f0f0f0">OK</div>
<div class="btn" style="left:343px;top:200px;width:28.7px;height:10px;border-color:#747474"></div>
<div class="dt" style="left:350.5px;top:202.6px;color:#e6e6e6">Cancel</div>
<div class="a" style="left:343px;top:217px;width:5px;height:5px;background:#d6d6d6;border-radius:0.6px"></div>
<svg class="a" style="left:343px;top:217px" width="5" height="5" viewBox="0 0 5 5"><path d="M1 2.6 L2.1 3.7 L4.1 1.2" fill="none" stroke="#333" stroke-width="0.7"/></svg>
<div class="dt" style="left:351.8px;top:217.6px">Preview</div>

<!-- Color Balance dialog -->
<div class="a" style="left:434.3px;top:150.6px;width:166.7px;height:121.4px;border:2.2px solid #f05a28;border-radius:5px;background:#535353;overflow:hidden;box-shadow:0 4px 14px rgba(0,0,0,0.3)">
  <div class="a" style="left:0;top:0;width:100%;height:12px;background:#f0f0f0"></div>
</div>
<div class="t" style="left:439px;top:156px;font-size:5px;color:#111">Color Balance</div>
<svg class="a" style="left:590px;top:155.2px" width="6" height="6" viewBox="0 0 6 6"><path d="M1 1 L5 5 M5 1 L1 5" stroke="#333" stroke-width="0.7"/></svg>
<div class="dt" style="left:443.5px;top:175.3px">Tone</div>
<div class="a" style="left:458.9px;top:173.8px;width:7.2px;height:7.2px;border-radius:50%;background:#000"></div>
<div class="dt" style="left:469px;top:175.3px">Shadows</div>
<div class="a" style="left:492.2px;top:173.6px;width:7.6px;height:7.6px;border-radius:50%;background:#888;border:0.9px solid #eee;box-shadow:inset 0 0 0 0.7px #444"></div>
<div class="dt" style="left:502.8px;top:175.3px">Midtones</div>
<div class="a" style="left:526.8px;top:173.6px;width:8px;height:8px;border-radius:50%;background:#fff"></div>
<div class="dt" style="left:537px;top:175.3px">Highlights</div>
<div class="btn" style="left:562.4px;top:173px;width:29.6px;height:9.3px;border-color:#c8c8c8"></div>
<div class="dt" style="left:573.5px;top:175.5px;color:#f0f0f0">OK</div>
<div class="btn" style="left:562.4px;top:187.4px;width:29.6px;height:9px;border-color:#747474"></div>
<div class="dt" style="left:570.2px;top:189.8px;color:#e6e6e6">Cancel</div>
<div class="a" style="left:562.4px;top:204px;width:5px;height:5px;background:#d6d6d6;border-radius:0.6px"></div>
<svg class="a" style="left:562.4px;top:204px" width="5" height="5" viewBox="0 0 5 5"><path d="M1 2.6 L2.1 3.7 L4.1 1.2" fill="none" stroke="#333" stroke-width="0.7"/></svg>
<div class="dt" style="left:571px;top:204.4px">Preview</div>

<div class="dt" style="left:443.5px;top:191.8px">Cyan to Red</div>
<div class="a" style="left:534.7px;top:189.5px;width:22.6px;height:9px;background:#484848;border:0.6px solid #5c5c5c;border-radius:1px"></div>
<div class="dt" style="left:537.5px;top:191.6px;color:#dcdcdc">-91</div>
<div class="a" style="left:443px;top:202.9px;width:2.5px;height:1.3px;background:#20c8d0"></div>
<div class="a" style="left:452px;top:202.9px;width:105.3px;height:1.3px;background:linear-gradient(90deg,#20c8d0,#20c0c8 20%,#888 60%,#e82020)"></div>
<div class="knob" style="left:445.9px;top:200.7px;background:#535353"></div>

<div class="dt" style="left:443.5px;top:211.4px">Magenta to Green</div>
<div class="a" style="left:534.2px;top:208.7px;width:23.1px;height:8.6px;background:#484848;border:0.6px solid #5c5c5c;border-radius:1px"></div>
<div class="dt" style="left:537.5px;top:210.7px;color:#dcdcdc">-7</div>
<div class="a" style="left:443px;top:222.3px;width:50.5px;height:1.3px;background:linear-gradient(90deg,#c020c0,#a040a0 60%,#806080)"></div>
<div class="a" style="left:500px;top:222.3px;width:57.3px;height:1.3px;background:linear-gradient(90deg,#608060,#30b030 60%,#20c020)"></div>
<div class="knob" style="left:493.6px;top:220.1px"></div>

<div class="dt" style="left:443.5px;top:230px">Yellow to Blue</div>
<div class="a" style="left:534px;top:227.3px;width:23.5px;height:10px;background:#454545;border:1px solid #2065c4;border-radius:1.5px"></div>
<div class="a" style="left:537px;top:229.6px;width:9.5px;height:5.4px;background:#1473e6"></div>
<div class="dt" style="left:537.3px;top:230px;color:#fff">+22</div>
<div class="a" style="left:443px;top:240.8px;width:66.5px;height:1.3px;background:linear-gradient(90deg,#d8d020,#b0b040 50%,#808080)"></div>
<div class="a" style="left:516px;top:240.8px;width:41.3px;height:1.3px;background:linear-gradient(90deg,#606090,#3030c0 60%,#1818d8)"></div>
<div class="knob" style="left:509.6px;top:238.6px"></div>

<div class="a" style="left:443px;top:255.5px;width:5px;height:5px;background:#d6d6d6;border-radius:0.6px"></div>
<svg class="a" style="left:443px;top:255.5px" width="5" height="5" viewBox="0 0 5 5"><path d="M1 2.6 L2.1 3.7 L4.1 1.2" fill="none" stroke="#333" stroke-width="0.7"/></svg>
<div class="dt" style="left:451.9px;top:255.8px">Preserve Luminosity</div>

</body></html>
